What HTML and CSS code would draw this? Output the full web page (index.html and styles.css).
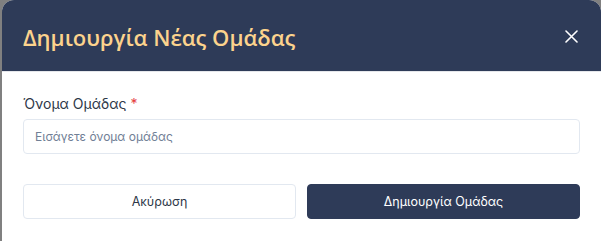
FILE: index.html
```html
<!DOCTYPE html>
<html lang="el">
<head>
<meta charset="utf-8">
<link rel="stylesheet" href="styles.css">
</head>
<body>
<div class="modal">
  <div class="header">
    <h2 class="title">Δημιουργία Νέας Ομάδας</h2>
    <button class="close" aria-label="close">
      <svg width="13" height="13" viewBox="0 0 13 13"><path d="M1 1L12 12M12 1L1 12" stroke="#fff" stroke-width="1.6" stroke-linecap="round"/></svg>
    </button>
  </div>
  <div class="body">
    <label class="label">Όνομα Ομάδας <span class="req">*</span></label>
    <input class="input" type="text" placeholder="Εισάγετε όνομα ομάδας">
    <div class="actions">
      <button class="btn btn-cancel">Ακύρωση</button>
      <button class="btn btn-primary">Δημιουργία Ομάδας</button>
    </div>
  </div>
</div>
</body>
</html>
```
FILE: styles.css
```css
html, body {
  margin: 0;
  padding: 0;
  background: #808080;
  height: 100%;
  overflow: hidden;
}
.modal {
  margin-left: 2px;
  width: 599px;
  height: 241px;
  background: #fff;
  border-radius: 12px 12px 0 0;
  overflow: hidden;
  font-family: Inter, "Noto Sans", sans-serif;
}
.header {
  height: 72px;
  background: #2e3b58;
  border-bottom: 1px solid #e5e7eb;
  box-sizing: border-box;
  display: flex;
  align-items: center;
  justify-content: space-between;
  padding: 2px 23px 0 21px;
}
.title {
  margin: 0;
  font-family: "Open Sans", "Noto Sans", sans-serif;
  font-weight: 600;
  font-size: 22px;
  color: #fcd38d;
}
.close {
  background: none;
  border: 0;
  padding: 0;
  width: 13px;
  height: 13px;
  display: flex;
}
.body {
  padding: 23px 21px 0 21px;
  display: flex;
  flex-direction: column;
}
.label {
  font-size: 14px;
  color: #2d3748;
  line-height: 18px;
}
.req { color: #e53e3e; }
.input {
  margin-top: 6px;
  height: 35px;
  box-sizing: border-box;
  border: 1px solid #e2e8f0;
  border-radius: 4px;
  padding: 0 11px;
  font-family: Inter, "Noto Sans", sans-serif;
  font-size: 12px;
  color: #2d3748;
  outline: none;
}
.input::placeholder { color: #718096; }
.actions {
  margin-top: 30px;
  display: flex;
  gap: 11px;
}
.btn {
  flex: 1;
  height: 35px;
  border-radius: 4px;
  font-family: Inter, "Noto Sans", sans-serif;
  font-size: 12.5px;
  cursor: pointer;
}
.btn-cancel {
  background: #fff;
  border: 1px solid #e2e8f0;
  color: #2d3748;
}
.btn-primary {
  background: #2e3b58;
  border: 1px solid #2e3b58;
  color: #fff;
}
```
